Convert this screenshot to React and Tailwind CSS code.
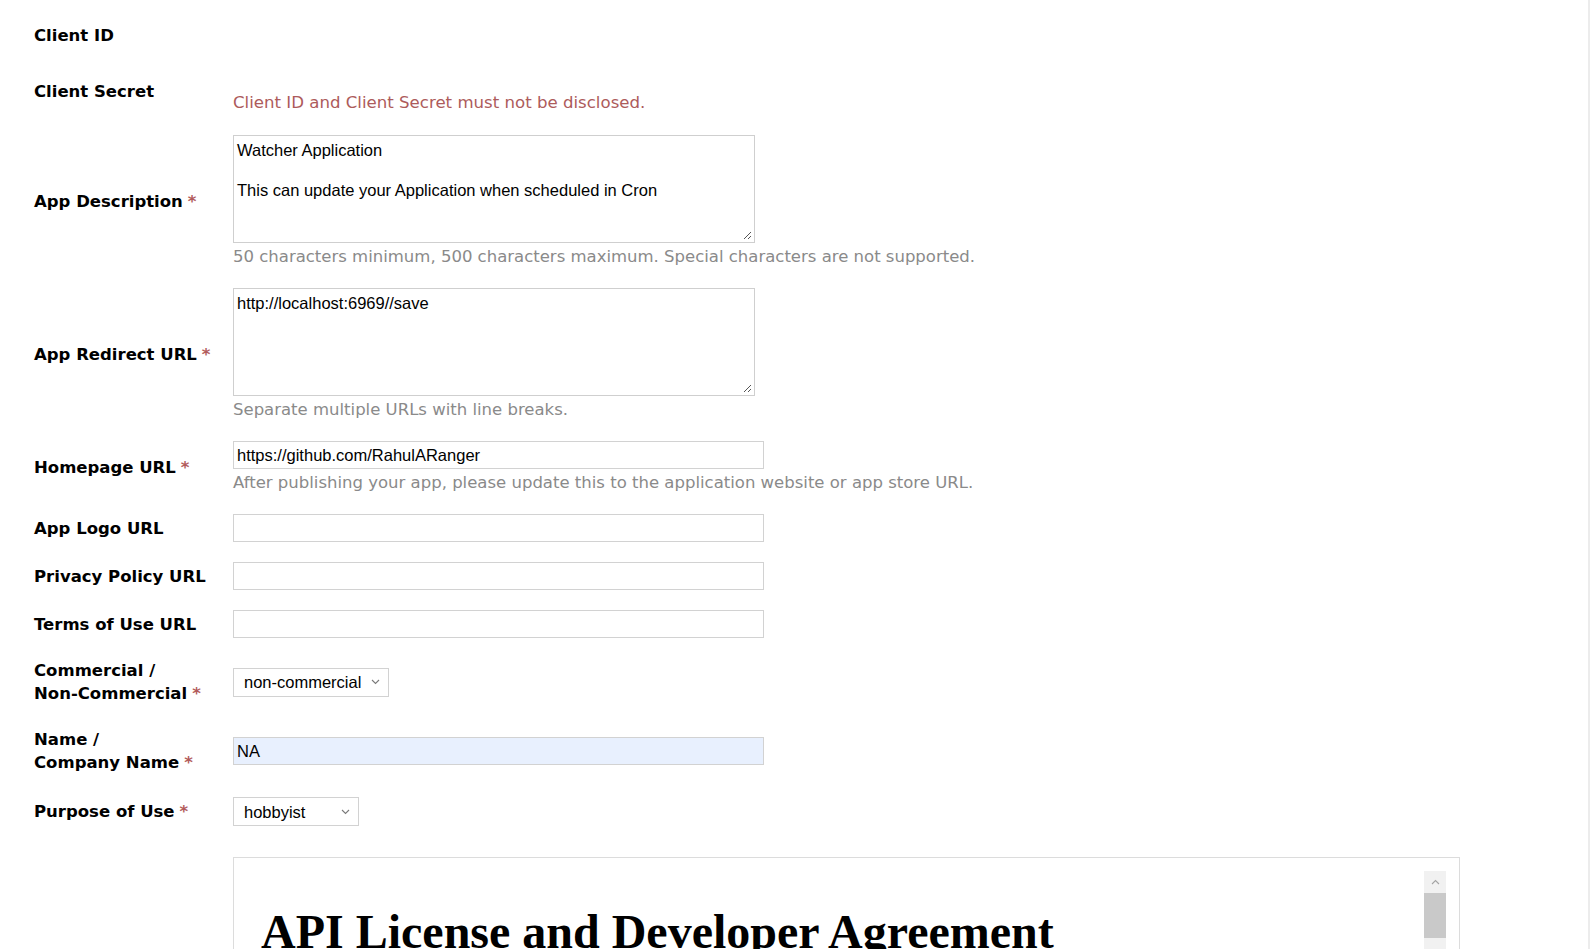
import React from 'react'

const labelCls = "font-['DejaVu_Sans',sans-serif] font-bold text-[16.5px] leading-[23px] text-black"
const helpCls = "font-['DejaVu_Sans',sans-serif] text-[16.5px] leading-[23px] text-[#8a8a8a] whitespace-nowrap"
const fieldFont = "font-['Liberation_Sans',Arial,sans-serif] text-[16.5px] text-black"

function Star(){
  return <span className="text-[#b25b5b] ml-[5px]">*</span>
}

function Chevron({ up }){
  return (
    <svg width="9" height="6" viewBox="0 0 9 6" className="shrink-0">
      <path d={up ? 'M1 5l3.5-3.5L8 5' : 'M1 1l3.5 3.5L8 1'} fill="none" stroke={up ? '#a3a3a3' : '#7a7a7a'} strokeWidth="1.1" />
    </svg>
  )
}

function ResizeGrip(){
  return (
    <svg width="10" height="10" viewBox="0 0 10 10" className="absolute right-[2px] bottom-[2px]">
      <path d="M9 2L2 9M9 6L6 9" stroke="#555" strokeWidth="1" />
    </svg>
  )
}

function Row({ label, required, className = '', children }){
  return (
    <div className={`grid grid-cols-[199px_1fr] items-center ${className}`}>
      <div className={labelCls}>
        {label}{required && <Star />}
      </div>
      <div>{children}</div>
    </div>
  )
}

function Area({ text }){
  return (
    <div className="relative w-[522px] h-[108px] border border-[#cfcfcf] bg-white px-[3px] pt-[4px]">
      <div className={`${fieldFont} leading-[20px] whitespace-pre`}>{text}</div>
      <ResizeGrip />
    </div>
  )
}

function Input({ value = '', filled }){
  return (
    <div className={`w-[531px] h-[28px] border border-[#d2d2d2] px-[3px] flex items-center ${filled ? 'bg-[#e8f0fe]' : 'bg-white'}`}>
      <span className={`${fieldFont} leading-[20px]`}>{value}</span>
    </div>
  )
}

function Select({ value, width }){
  return (
    <div className={`${width} h-[29px] border border-[#d2d2d2] bg-white pl-[10px] pr-[8px] flex items-center justify-between`}>
      <span className={`${fieldFont} leading-[20px]`}>{value}</span>
      <Chevron />
    </div>
  )
}

export default function App(){
  return (
    <div className="h-[949px] overflow-hidden bg-white flex">
      <div className="flex-1 pl-[34px] pt-[24px] flex flex-col">
        <Row label="Client ID">
          <div className="h-[23px]" />
        </Row>

        <Row label="Client Secret" className="mt-[21px]">
          <div className="h-[23px]" />
          <div className="font-['DejaVu_Sans',sans-serif] text-[16.6px] leading-[23px] text-[#ad5b5b]">
            Client ID and Client Secret must not be disclosed.
          </div>
        </Row>

        <Row label="App Description" required className="mt-[21px]">
          <Area text={'Watcher Application\n\nThis can update your Application when scheduled in Cron'} />
          <div className={`${helpCls} mt-[2px]`}>50 characters minimum, 500 characters maximum. Special characters are not supported.</div>
        </Row>

        <Row label="App Redirect URL" required className="mt-[20px]">
          <Area text="http://localhost:6969//save" />
          <div className={`${helpCls} mt-[2px]`}>Separate multiple URLs with line breaks.</div>
        </Row>

        <Row label="Homepage URL" required className="mt-[20px]">
          <Input value="https://github.com/RahulARanger" />
          <div className={`${helpCls} mt-[2px]`}>After publishing your app, please update this to the application website or app store URL.</div>
        </Row>

        <Row label="App Logo URL" className="mt-[20px]">
          <Input />
        </Row>

        <Row label="Privacy Policy URL" className="mt-[20px]">
          <Input />
        </Row>

        <Row label="Terms of Use URL" className="mt-[20px]">
          <Input />
        </Row>

        <Row label={<>Commercial /<br />Non-Commercial</>} required className="mt-[21px]">
          <Select value="non-commercial" width="w-[156px]" />
        </Row>

        <Row label={<>Name /<br />Company Name</>} required className="mt-[23px]">
          <Input value="NA" filled />
        </Row>

        <Row label="Purpose of Use" required className="mt-[23px]">
          <Select value="hobbyist" width="w-[126px]" />
        </Row>

        <div className="grid grid-cols-[199px_1fr] mt-[31px]">
          <div />
          <div className="w-[1227px] h-[400px] border border-[#dcdcdc] p-[13px] flex">
            <div className="flex-1 pl-[14px] pt-[33px]">
              <h1 className="font-['Liberation_Serif','Times_New_Roman',serif] font-bold text-[48px] leading-[55px] text-black whitespace-nowrap">
                API License and Developer Agreement
              </h1>
            </div>
            <div className="w-[22px] flex flex-col bg-[#f1f1f1]">
              <div className="h-[22px] flex items-center justify-center">
                <Chevron up />
              </div>
              <div className="h-[45px] bg-[#c9c9c9]" />
            </div>
          </div>
        </div>
      </div>
      <div className="w-[3px] border-l-2 border-[#ececec]" />
    </div>
  )
}
